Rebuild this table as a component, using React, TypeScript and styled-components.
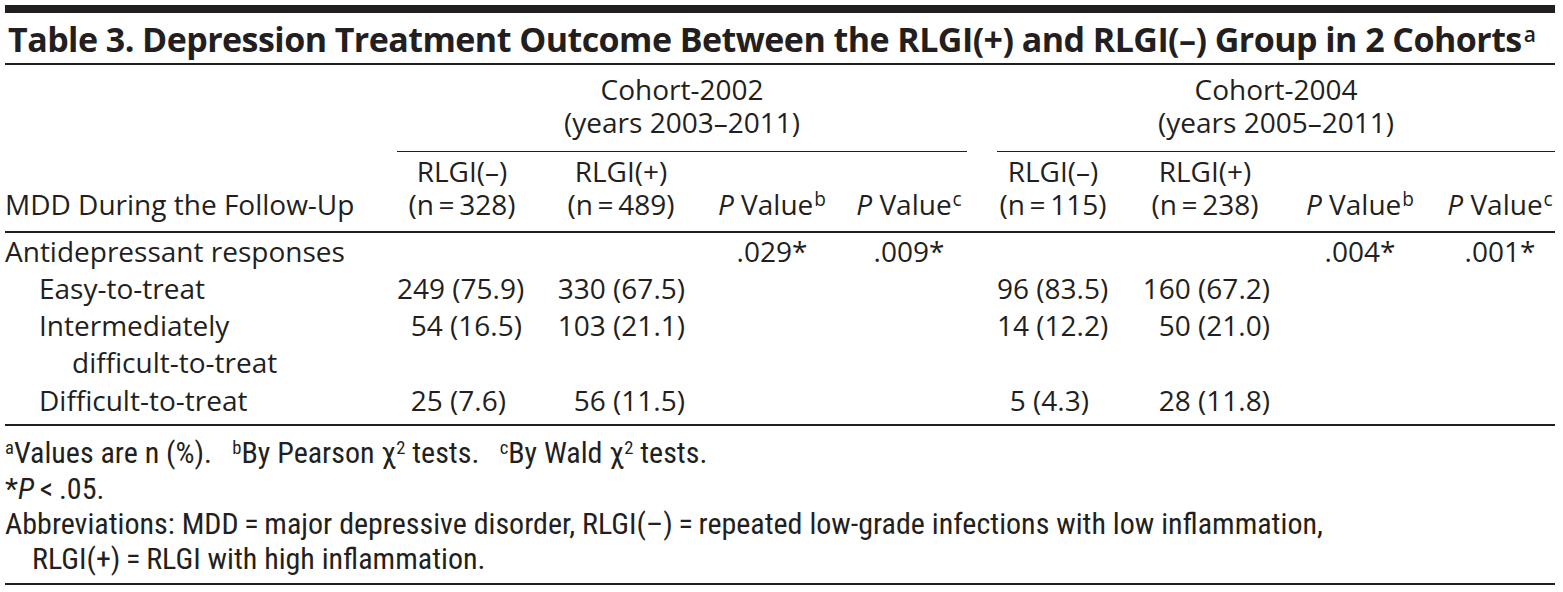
import React from "react";
import styled, { createGlobalStyle } from "styled-components";

const ink = "#231f20";

const GlobalStyle = createGlobalStyle`
  html, body { margin: 0; padding: 0; background: #ffffff; }
  body { font-family: "Open Sans", "Noto Sans", sans-serif; color: ${ink}; }
`;

const Page = styled.div`
  width: 1550px;
  padding: 5px 8px 0 5px;
`;

const Title = styled.h1`
  margin: 0;
  border-top: 8px solid ${ink};
  border-bottom: 2px solid ${ink};
  padding: 4px 0 2px 3px;
  font-size: 34px;
  line-height: 44px;
  font-weight: 700;
  letter-spacing: -0.55px;
  white-space: nowrap;
`;

const TitleSup = styled.sup`
  font-size: 21px;
  font-weight: 600;
  vertical-align: 0.5em;
  line-height: 0;
  margin-left: 2px;
`;

const cols = "392px 130px 188px 114px 138px 30px 112px 192px 118px 136px";

const Head = styled.div`
  display: grid;
  grid-template-columns: ${cols};
  padding-top: 8px;
  border-bottom: 2px solid ${ink};
  font-size: 28px;
  line-height: 33px;
`;

const Cohort = styled.div<{ $from: number }>`
  grid-column: ${(p) => p.$from} / span 4;
  grid-row: 1;
  text-align: center;
  padding-bottom: 12px;
  border-bottom: 1.5px solid ${ink};
`;

const ColHead = styled.div<{ $col: number; $shift?: number }>`
  grid-column: ${(p) => p.$col};
  grid-row: 2;
  align-self: end;
  text-align: center;
  padding: 3px 0 9.5px ${(p) => p.$shift ?? 0}px;
  white-space: nowrap;
`;

const StubHead = styled.div`
  grid-column: 1;
  grid-row: 2;
  align-self: end;
  padding: 3px 0 9.5px;
  white-space: nowrap;
`;

const Sup = styled.sup`
  font-size: 0.68em;
  vertical-align: 0.48em;
  line-height: 0;
  margin-left: 1px;
`;

const Ital = styled.i`
  font-style: italic;
`;

const Body = styled.div`
  display: grid;
  grid-template-columns: ${cols};
  padding-bottom: 5.5px;
  border-bottom: 2px solid ${ink};
  font-size: 28px;
  line-height: 37.3px;
`;

const Stub = styled.div<{ $indent: number }>`
  grid-column: 1;
  padding-left: ${(p) => p.$indent}px;
  white-space: nowrap;
`;

const Wrapped = styled.span`
  display: block;
  padding-left: 33px;
`;

const Num = styled.div<{ $col: number; $pr: number }>`
  grid-column: ${(p) => p.$col};
  text-align: right;
  padding-right: ${(p) => p.$pr}px;
  white-space: pre;
`;

const PVal = styled.div<{ $col: number; $shift?: number }>`
  grid-column: ${(p) => p.$col};
  text-align: center;
  padding-left: ${(p) => p.$shift ?? 0}px;
`;

const Notes = styled.div`
  padding: 9px 0 6px;
  border-bottom: 2px solid ${ink};
  font-family: "Roboto Condensed", "Open Sans", sans-serif;
  font-weight: 400;
  font-size: 30px;
  line-height: 35.3px;
`;

const Note = styled.div`
  white-space: pre;
`;

const Hanging = styled.div`
  padding-left: 27px;
  text-indent: -27px;
  white-space: pre;
`;

const FSup = styled.sup`
  font-size: 0.62em;
  vertical-align: 0.5em;
  line-height: 0;
`;

type Row = {
  label: React.ReactNode;
  indent: number;
  a?: string;
  b?: string;
  c?: string;
  d?: string;
  e?: string;
  f?: string;
  g?: string;
  h?: string;
};

const fs = "\u2007";
const eq = "\u2009=\u2009";

const rows: Row[] = [
  { label: "Antidepressant responses", indent: 0, c: ".029*", d: ".009*", g: ".004*", h: ".001*" },
  { label: "Easy-to-treat", indent: 34, a: "249 (75.9)", b: "330 (67.5)", e: "96 (83.5)", f: "160 (67.2)" },
  {
    label: (
      <>
        Intermediately
        <Wrapped>difficult-to-treat</Wrapped>
      </>
    ),
    indent: 34,
    a: "54 (16.5)",
    b: "103 (21.1)",
    e: "14 (12.2)",
    f: "50 (21.0)",
  },
  { label: "Difficult-to-treat", indent: 34, a: "25 (7.6)" + fs, b: "56 (11.5)", e: "5 (4.3)" + fs, f: "28 (11.8)" },
];

const PHead = ({ col, sup, shift }: { col: number; sup: string; shift?: number }) => (
  <ColHead $col={col} $shift={shift}>
    <Ital>P</Ital> Value<Sup>{sup}</Sup>
  </ColHead>
);

const GroupHead = ({ col, sign, n }: { col: number; sign: string; n: number }) => (
  <ColHead $col={col}>
    RLGI({sign})
    <br />
    (n{eq}
    {n})
  </ColHead>
);

export default function App() {
  return (
    <>
      <GlobalStyle />
      <Page>
        <Title>
          Table 3. Depression Treatment Outcome Between the RLGI(+) and RLGI(–) Group in 2 Cohorts
          <TitleSup>a</TitleSup>
        </Title>

        <Head>
          <Cohort $from={2}>
            Cohort-2002
            <br />
            (years 2003–2011)
          </Cohort>
          <Cohort $from={7}>
            Cohort-2004
            <br />
            (years 2005–2011)
          </Cohort>
          <StubHead>MDD During the Follow-Up</StubHead>
          <GroupHead col={2} sign="–" n={328} />
          <GroupHead col={3} sign="+" n={489} />
          <PHead col={4} sup="b" />
          <PHead col={5} sup="c" shift={22} />
          <GroupHead col={7} sign="–" n={115} />
          <GroupHead col={8} sign="+" n={238} />
          <PHead col={9} sup="b" />
          <PHead col={10} sup="c" shift={26} />
        </Head>

        <Body>
          {rows.map((r, i) => (
            <React.Fragment key={i}>
              <Stub $indent={r.indent}>{r.label}</Stub>
              <Num $col={2} $pr={5}>{r.a ?? ""}</Num>
              <Num $col={3} $pr={30}>{r.b ?? ""}</Num>
              <PVal $col={4}>{r.c ?? ""}</PVal>
              <PVal $col={5} $shift={22}>{r.d ?? ""}</PVal>
              <Num $col={7} $pr={4}>{r.e ?? ""}</Num>
              <Num $col={8} $pr={31}>{r.f ?? ""}</Num>
              <PVal $col={9}>{r.g ?? ""}</PVal>
              <PVal $col={10} $shift={26}>{r.h ?? ""}</PVal>
            </React.Fragment>
          ))}
        </Body>

        <Notes>
          <Note>
            <FSup>a</FSup>Values are n (%).{"\u2002 "}
            <FSup>b</FSup>By Pearson χ<FSup>2</FSup> tests.{"\u2002 "}
            <FSup>c</FSup>By Wald χ<FSup>2</FSup> tests.
          </Note>
          <Note>
            *<Ital>P</Ital>
            {"\u2009<\u2009"}.05.
          </Note>
          <Hanging>
            {`Abbreviations: MDD${eq}major depressive disorder, RLGI(–)${eq}repeated low-grade infections with low inflammation,`}
            <br />
            {`RLGI(+)${eq}RLGI with high inflammation.`}
          </Hanging>
        </Notes>
      </Page>
    </>
  );
}
